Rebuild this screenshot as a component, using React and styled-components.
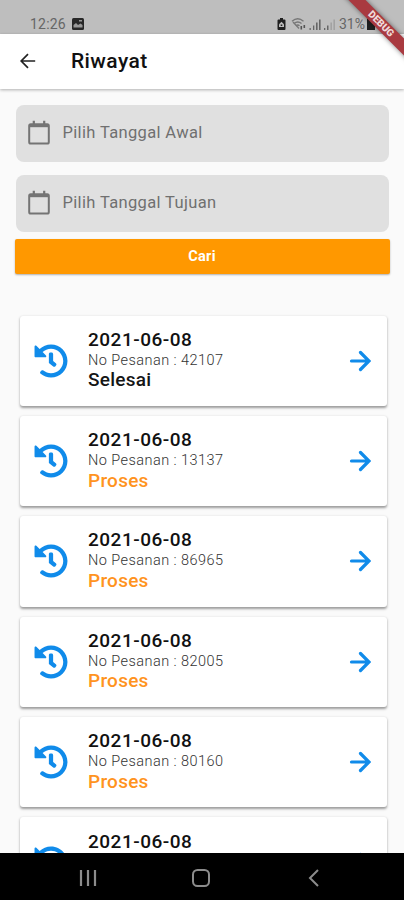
import styled, { createGlobalStyle } from "styled-components";
//Icons
import { FaHistory } from "react-icons/fa";

//Data
const orders = [
  { id: "42107", date: "2021-06-08", status: "Selesai" },
  { id: "13137", date: "2021-06-08", status: "Proses" },
  { id: "86965", date: "2021-06-08", status: "Proses" },
  { id: "82005", date: "2021-06-08", status: "Proses" },
  { id: "80160", date: "2021-06-08", status: "Proses" },
  //Only the top of this one is above the nav bar
  { date: "2021-06-08" },
];

const CalendarIcon = () => (
  <svg width="22" height="25" viewBox="0 0 22 25" fill="none">
    <rect x="1.2" y="4.2" width="19.6" height="19.3" rx="1.6" stroke="#747474" strokeWidth="2" />
    <path d="M1 4h20v3.2H1z" fill="#747474" />
    <path d="M5.8 0.8v4M16.2 0.8v4" stroke="#747474" strokeWidth="2.2" />
  </svg>
);

const StatusIcons = () => (
  <svg width="62" height="14" viewBox="0 0 62 14">
    <path d="M1.500 2.500H3V1h3v1.500h1.500a1 1 0 0 1 1 1V12a1 1 0 0 1-1 1h-6a1 1 0 0 1-1-1V3.500a1 1 0 0 1 1-1z" fill="#202020" />
    <path d="M4.500 4.800L7 7.200V10H2V7.200z" fill="#bdbdbd" />
    <path d="M3.700 7.500h1.600V9H3.700z" fill="#202020" />
    <g fill="none" stroke="#777" strokeWidth="1.300">
      <path d="M15 4.200c3.500-3 8-3 11.500 0M17 6.600c2.300-2 5.200-2 7.500 0M19 8.800c1.200-1 2.500-1 3.500 0" />
      <path d="M22 11.500l-6-6.500" />
    </g>
    <path d="M23.500 9h1.600v3.500h-1.600zM26.500 8h1.600v3h-1.600z" fill="#555" />
    <path d="M32.500 11h1.300v2h-1.300zM36 8.500h1.300V13H36zM39 5.500h1.600V13H39zM42 2.500h1.600V13H42z" fill="#666" />
    <path d="M47 11h1.300v2H47zM50 8.500h1.500V13H50z" fill="#666" />
    <path d="M53.500 5.500h1.300V13h-1.300zM56.500 2.500h1.300V13h-1.300z" fill="#9c9c9c" />
  </svg>
);

const DateInput = ({ label }) => (
  <Field>
    <CalendarIcon />
    <span>{label}</span>
  </Field>
);

const OrderCard = ({ order }) => (
  <Card>
    <FaHistory size={34} color="#108bea" />
    <OrderInfo>
      <h3>{order.date}</h3>
      {order.id && <p>No Pesanan : {order.id}</p>}
      {order.status && (
        <Status $done={order.status === "Selesai"}>{order.status}</Status>
      )}
    </OrderInfo>
    <svg width="22" height="22" viewBox="0 0 22 22" fill="none">
      <path
        d="M2.500 11h17M11.500 2.500L20 11l-8.500 8.500"
        stroke="#108bea"
        strokeWidth="3.200"
        strokeLinecap="round"
      />
    </svg>
  </Card>
);

const App = () => {
  return (
    <>
      <GlobalStyle />
      <Screen>
        <StatusBar>
          <Clock>12:26</Clock>
          <svg width="12" height="12" viewBox="0 0 12 12">
            <rect width="12" height="12" rx="1.500" fill="#282828" />
            <path d="M1.500 9.500V7l2.500-2 2 2 2.500-1.500 2 1.500v2.500zM7 2h3v1.500H7z" fill="#999" />
          </svg>
          <StatusRight>
            <StatusIcons />
            <span>31%</span>
            <svg width="8" height="13" viewBox="0 0 8 13">
              <path d="M2.500 0h3v1.500H8V13H0V1.500h2.500z" fill="#202020" />
            </svg>
          </StatusRight>
        </StatusBar>
        <AppBar>
          <svg width="16" height="16" viewBox="0 0 16 16" fill="none">
            <path d="M15.200 8H1.500M8 1.200L1.200 8 8 14.800" stroke="#222" strokeWidth="1.700" />
          </svg>
          <h1>Riwayat</h1>
        </AppBar>
        <Filter>
          <DateInput label="Pilih Tanggal Awal" />
          <DateInput label="Pilih Tanggal Tujuan" />
          <SearchButton>Cari</SearchButton>
        </Filter>
        <List>
          {orders.map((order, i) => (
            <OrderCard key={i} order={order} />
          ))}
        </List>
        <NavBar>
          <svg width="18" height="18" viewBox="0 0 18 18">
            <path d="M2 1v16M9 1v16M16 1v16" stroke="#8c8c8c" strokeWidth="2.200" />
          </svg>
          <svg width="18" height="18" viewBox="0 0 18 18" fill="none">
            <rect x="1" y="1" width="16" height="16" rx="4.500" stroke="#8c8c8c" strokeWidth="2" />
          </svg>
          <svg width="18" height="18" viewBox="0 0 18 18" fill="none">
            <path d="M13 1L5 9l8 8" stroke="#8c8c8c" strokeWidth="2" />
          </svg>
        </NavBar>
        <DebugBanner>DEBUG</DebugBanner>
      </Screen>
    </>
  );
};

const GlobalStyle = createGlobalStyle`
  * {
    margin: 0;
    padding: 0;
    box-sizing: border-box;
  }

  body {
    font-family: Roboto, "Liberation Sans", sans-serif;
    background: #fafafa;
  }

  svg {
    flex-shrink: 0;
  }
`;

const Screen = styled.div`
  position: relative;
  display: flex;
  flex-direction: column;
  width: 404px;
  height: 900px;
  overflow: hidden;
  background: #fafafa;
`;

const StatusBar = styled.div`
  display: flex;
  align-items: center;
  flex-shrink: 0;
  height: 34px;
  padding: 13px 29px 0 30px;
  background: #bebebe;
  color: #666;
  font-size: 14px;
`;

const Clock = styled.span`
  margin-right: 6px;
  letter-spacing: 0.2px;
`;

const StatusRight = styled.div`
  display: flex;
  align-items: center;
  margin-left: auto;
  span {
    margin: 0 2px 0 0;
  }
`;

const AppBar = styled.header`
  display: flex;
  align-items: center;
  flex-shrink: 0;
  height: 55px;
  padding: 0 0 2px 20px;
  background: white;
  box-shadow: 0 1px 3px rgba(0, 0, 0, 0.3);
  h1 {
    margin-left: 35px;
    font-size: 21px;
    font-weight: 500;
    letter-spacing: 0.4px;
    color: #111;
  }
`;

const Filter = styled.section`
  display: flex;
  flex-direction: column;
  flex-shrink: 0;
  padding: 15.500px 14px 0 15px;
`;

const Field = styled.div`
  display: flex;
  align-items: center;
  height: 57.500px;
  margin: 0 1px 12.500px;
  padding-left: 12px;
  border-radius: 8px;
  background: #e0e0e0;
  svg {
    margin-top: -1px;
  }
  span {
    margin: -2px 0 0 12.500px;
    font-size: 16.500px;
    letter-spacing: 0.35px;
    color: #707070;
  }
  & + & {
    margin-bottom: 6.500px;
  }
`;

const SearchButton = styled.button`
  height: 35.500px;
  padding-right: 1px;
  border: none;
  border-radius: 2px;
  background: #ff9800;
  color: white;
  font-family: inherit;
  font-size: 14.500px;
  font-weight: 700;
  letter-spacing: 0.3px;
  box-shadow: 0 1px 2px rgba(0, 0, 0, 0.3);
`;

const List = styled.main`
  display: flex;
  flex: 1;
  flex-direction: column;
  gap: 10px;
  min-height: 0;
  padding: 41.500px 17.500px 0 19.500px;
  overflow: hidden;
`;

const Card = styled.article`
  display: flex;
  align-items: center;
  flex-shrink: 0;
  height: 90.400px;
  padding: 0 16px 0 14.500px;
  border-radius: 3px;
  background: white;
  box-shadow: 0 1.500px 2.500px rgba(0, 0, 0, 0.38);
`;

const OrderInfo = styled.div`
  flex: 1;
  height: 63px;
  margin: -1px 0 0 20px;
  h3 {
    font-size: 19px;
    font-weight: 500;
    line-height: 21px;
    letter-spacing: 0.5px;
    color: #111;
  }
  p {
    margin-bottom: -2px;
    font-size: 14.500px;
    font-weight: 300;
    line-height: 21.500px;
    letter-spacing: 0.450px;
    color: #333;
  }
`;

const Status = styled.strong`
  display: block;
  font-size: 19px;
  font-weight: 500;
  line-height: 21px;
  letter-spacing: 0.25px;
  color: ${({ $done }) => ($done ? "#151515" : "#ff9320")};
`;

const NavBar = styled.nav`
  display: flex;
  align-items: center;
  justify-content: space-between;
  flex-shrink: 0;
  height: 47px;
  padding: 3px 81px 0 79px;
  background: black;
`;

const DebugBanner = styled.div`
  position: absolute;
  top: 17.500px;
  right: -27px;
  width: 100px;
  height: 12px;
  background: #a93a40;
  color: #f0dada;
  font-size: 10px;
  font-weight: 900;
  line-height: 12px;
  text-align: center;
  transform: rotate(45deg);
  box-shadow: 0 0 5px rgba(0, 0, 0, 0.5);
`;

export default App;
